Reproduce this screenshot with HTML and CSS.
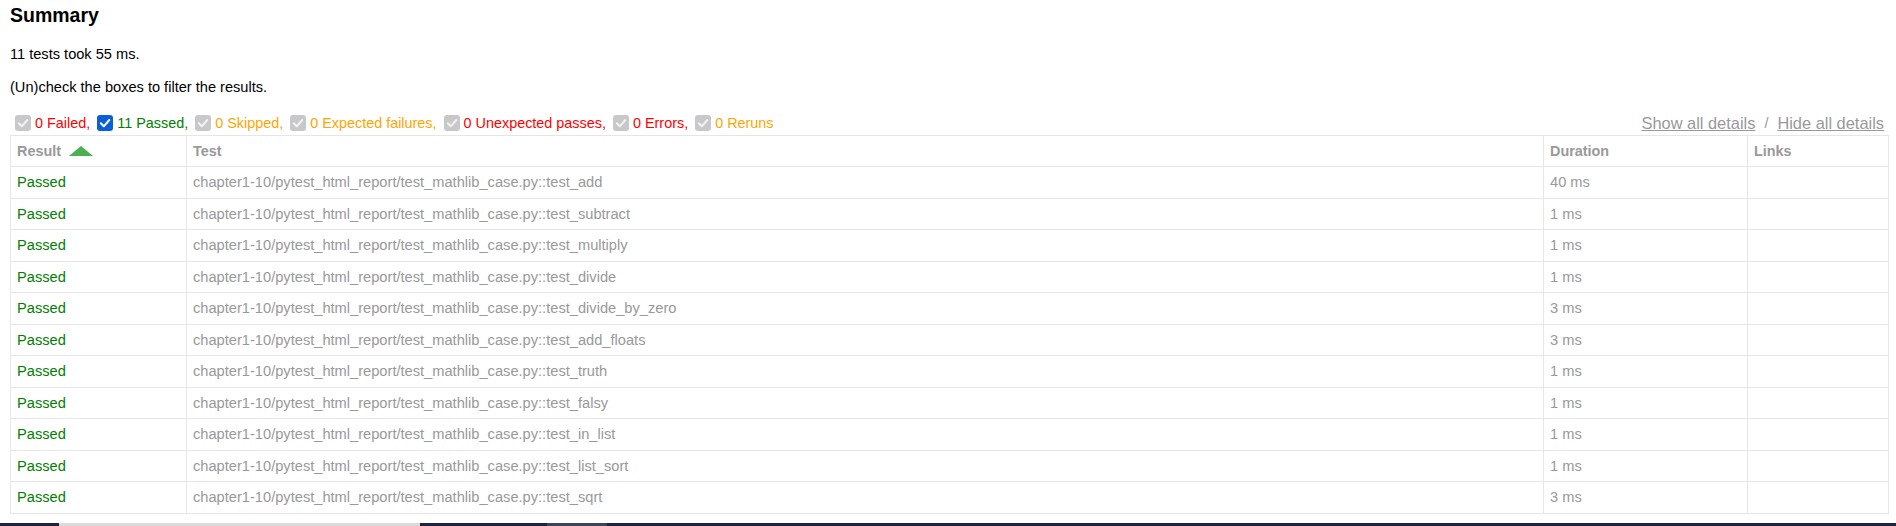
FILE: index.html
```html
<!DOCTYPE html>
<html lang="en">
<head>
<meta charset="utf-8">
<title>report.html</title>
<link rel="stylesheet" href="styles.css">
</head>
<body>
<h2 class="summary-title">Summary</h2>
<p class="summary-line">11 tests took 55 ms.</p>
<p class="filter-hint">(Un)check the boxes to filter the results.</p>
<div class="controls">
  <div class="filters">
    <span class="filter"><span class="box box-off"><svg viewBox="0 0 16 16" width="16" height="16"><rect x="0" y="0" width="16" height="16" rx="3"/><path d="M3.8 8.3 L6.8 11.3 L12.3 5"/></svg></span><span class="failed">0 Failed,</span></span>
    <span class="filter"><span class="box box-on"><svg viewBox="0 0 16 16" width="16" height="16"><rect x="0" y="0" width="16" height="16" rx="3"/><path d="M3.8 8.3 L6.8 11.3 L12.3 5"/></svg></span><span class="passed">11 Passed,</span></span>
    <span class="filter"><span class="box box-off"><svg viewBox="0 0 16 16" width="16" height="16"><rect x="0" y="0" width="16" height="16" rx="3"/><path d="M3.8 8.3 L6.8 11.3 L12.3 5"/></svg></span><span class="skipped">0 Skipped,</span></span>
    <span class="filter"><span class="box box-off"><svg viewBox="0 0 16 16" width="16" height="16"><rect x="0" y="0" width="16" height="16" rx="3"/><path d="M3.8 8.3 L6.8 11.3 L12.3 5"/></svg></span><span class="skipped">0 Expected failures,</span></span>
    <span class="filter"><span class="box box-off"><svg viewBox="0 0 16 16" width="16" height="16"><rect x="0" y="0" width="16" height="16" rx="3"/><path d="M3.8 8.3 L6.8 11.3 L12.3 5"/></svg></span><span class="failed">0 Unexpected passes,</span></span>
    <span class="filter"><span class="box box-off"><svg viewBox="0 0 16 16" width="16" height="16"><rect x="0" y="0" width="16" height="16" rx="3"/><path d="M3.8 8.3 L6.8 11.3 L12.3 5"/></svg></span><span class="failed">0 Errors,</span></span>
    <span class="filter"><span class="box box-off"><svg viewBox="0 0 16 16" width="16" height="16"><rect x="0" y="0" width="16" height="16" rx="3"/><path d="M3.8 8.3 L6.8 11.3 L12.3 5"/></svg></span><span class="skipped">0 Reruns</span></span>
  </div>
  <div class="collapse">
    <span class="link">Show all details</span><span class="sep">/</span><span class="link">Hide all details</span>
  </div>
</div>
<table class="results">
  <colgroup>
    <col class="col-result">
    <col class="col-test">
    <col class="col-duration">
    <col class="col-links">
  </colgroup>
  <thead>
    <tr><th>Result<span class="sort-arrow"></span></th><th>Test</th><th>Duration</th><th>Links</th></tr>
  </thead>
  <tbody>
    <tr><td class="passed">Passed</td><td>chapter1-10/pytest_html_report/test_mathlib_case.py::test_add</td><td>40 ms</td><td></td></tr>
    <tr><td class="passed">Passed</td><td>chapter1-10/pytest_html_report/test_mathlib_case.py::test_subtract</td><td>1 ms</td><td></td></tr>
    <tr><td class="passed">Passed</td><td>chapter1-10/pytest_html_report/test_mathlib_case.py::test_multiply</td><td>1 ms</td><td></td></tr>
    <tr><td class="passed">Passed</td><td>chapter1-10/pytest_html_report/test_mathlib_case.py::test_divide</td><td>1 ms</td><td></td></tr>
    <tr><td class="passed">Passed</td><td>chapter1-10/pytest_html_report/test_mathlib_case.py::test_divide_by_zero</td><td>3 ms</td><td></td></tr>
    <tr><td class="passed">Passed</td><td>chapter1-10/pytest_html_report/test_mathlib_case.py::test_add_floats</td><td>3 ms</td><td></td></tr>
    <tr><td class="passed">Passed</td><td>chapter1-10/pytest_html_report/test_mathlib_case.py::test_truth</td><td>1 ms</td><td></td></tr>
    <tr><td class="passed">Passed</td><td>chapter1-10/pytest_html_report/test_mathlib_case.py::test_falsy</td><td>1 ms</td><td></td></tr>
    <tr><td class="passed">Passed</td><td>chapter1-10/pytest_html_report/test_mathlib_case.py::test_in_list</td><td>1 ms</td><td></td></tr>
    <tr><td class="passed">Passed</td><td>chapter1-10/pytest_html_report/test_mathlib_case.py::test_list_sort</td><td>1 ms</td><td></td></tr>
    <tr><td class="passed">Passed</td><td>chapter1-10/pytest_html_report/test_mathlib_case.py::test_sqrt</td><td>3 ms</td><td></td></tr>
  </tbody>
</table>
<div class="taskbar">
  <div class="seg seg-start"></div>
  <div class="seg seg-light"></div>
  <div class="seg seg-dark"></div>
  <div class="seg seg-mid"></div>
</div>
</body>
</html>
```
FILE: styles.css
```css
html, body {
  margin: 0;
  padding: 0;
}

body {
  font-family: "Liberation Sans", Arial, Helvetica, sans-serif;
  font-size: 14.4px;
  color: #999;
  background: #fff;
  padding: 4px 8px 0 10px;
}

.summary-title {
  font-size: 19.5px;
  font-weight: bold;
  line-height: 22px;
  margin: 0;
  color: #000;
}

.summary-line {
  margin: 20px 0 0;
  font-size: 14.6px;
  line-height: 16px;
  color: #000;
}

.filter-hint {
  margin: 17px 0 0;
  font-size: 14.6px;
  line-height: 16px;
  color: #000;
}

.controls {
  display: flex;
  justify-content: space-between;
  align-items: center;
  height: 20px;
  margin-top: 18px;
}

.filters {
  display: flex;
  align-items: center;
  padding-left: 5px;
  line-height: 16px;
}

.filter {
  display: flex;
  align-items: center;
  margin-right: 7px;
}

.box {
  display: block;
  width: 16px;
  height: 16px;
  margin-right: 4px;
}

.box svg {
  display: block;
}

.box path {
  fill: none;
  stroke-width: 2;
  stroke-linecap: round;
  stroke-linejoin: round;
}

.box-off rect {
  fill: #c8c8cb;
}

.box-off path {
  stroke: #f2f2f2;
}

.box-on rect {
  fill: #0b5fd6;
}

.box-on path {
  stroke: #ffffff;
}

.failed {
  color: #ff0000;
}

.passed {
  color: #008000;
}

.skipped {
  color: #ffa500;
}

.collapse {
  display: flex;
  align-items: center;
  padding-right: 4px;
  line-height: 19px;
}

.link {
  font-size: 16.4px;
  color: #999;
  text-decoration: underline;
}

.sep {
  font-size: 14.4px;
  margin: 0 9px;
  color: #999;
}

.results {
  border-collapse: collapse;
  table-layout: fixed;
  width: 1878px;
  margin-top: 2px;
  border: 1px solid #e6e6e6;
  color: #999;
}

.col-result { width: 176px; }
.col-test { width: 1357px; }
.col-duration { width: 204px; }
.col-links { width: 141px; }

.results th,
.results td {
  border: 1px solid #e6e6e6;
  padding: 0 6px;
  text-align: left;
  vertical-align: middle;
  white-space: nowrap;
  line-height: 16px;
  box-sizing: border-box;
}

.results th {
  height: 31px;
  font-weight: bold;
}

.results td {
  height: 31.5px;
  font-size: 14.65px;
}

.results td.passed {
  color: #008000;
}

.sort-arrow {
  display: inline-block;
  width: 0;
  height: 0;
  border-left: 12px solid transparent;
  border-right: 12px solid transparent;
  border-bottom: 10px solid #4caf50;
  margin-left: 8px;
}

.taskbar {
  position: fixed;
  left: 0;
  right: 0;
  bottom: 0;
  height: 3px;
  display: flex;
  background: #1b2440;
}

.seg {
  height: 3px;
}

.seg-start { width: 59px; }
.seg-light { width: 361px; background: #dadada; }
.seg-dark { width: 127px; }
.seg-mid { width: 60px; background: #3c4459; }
```
